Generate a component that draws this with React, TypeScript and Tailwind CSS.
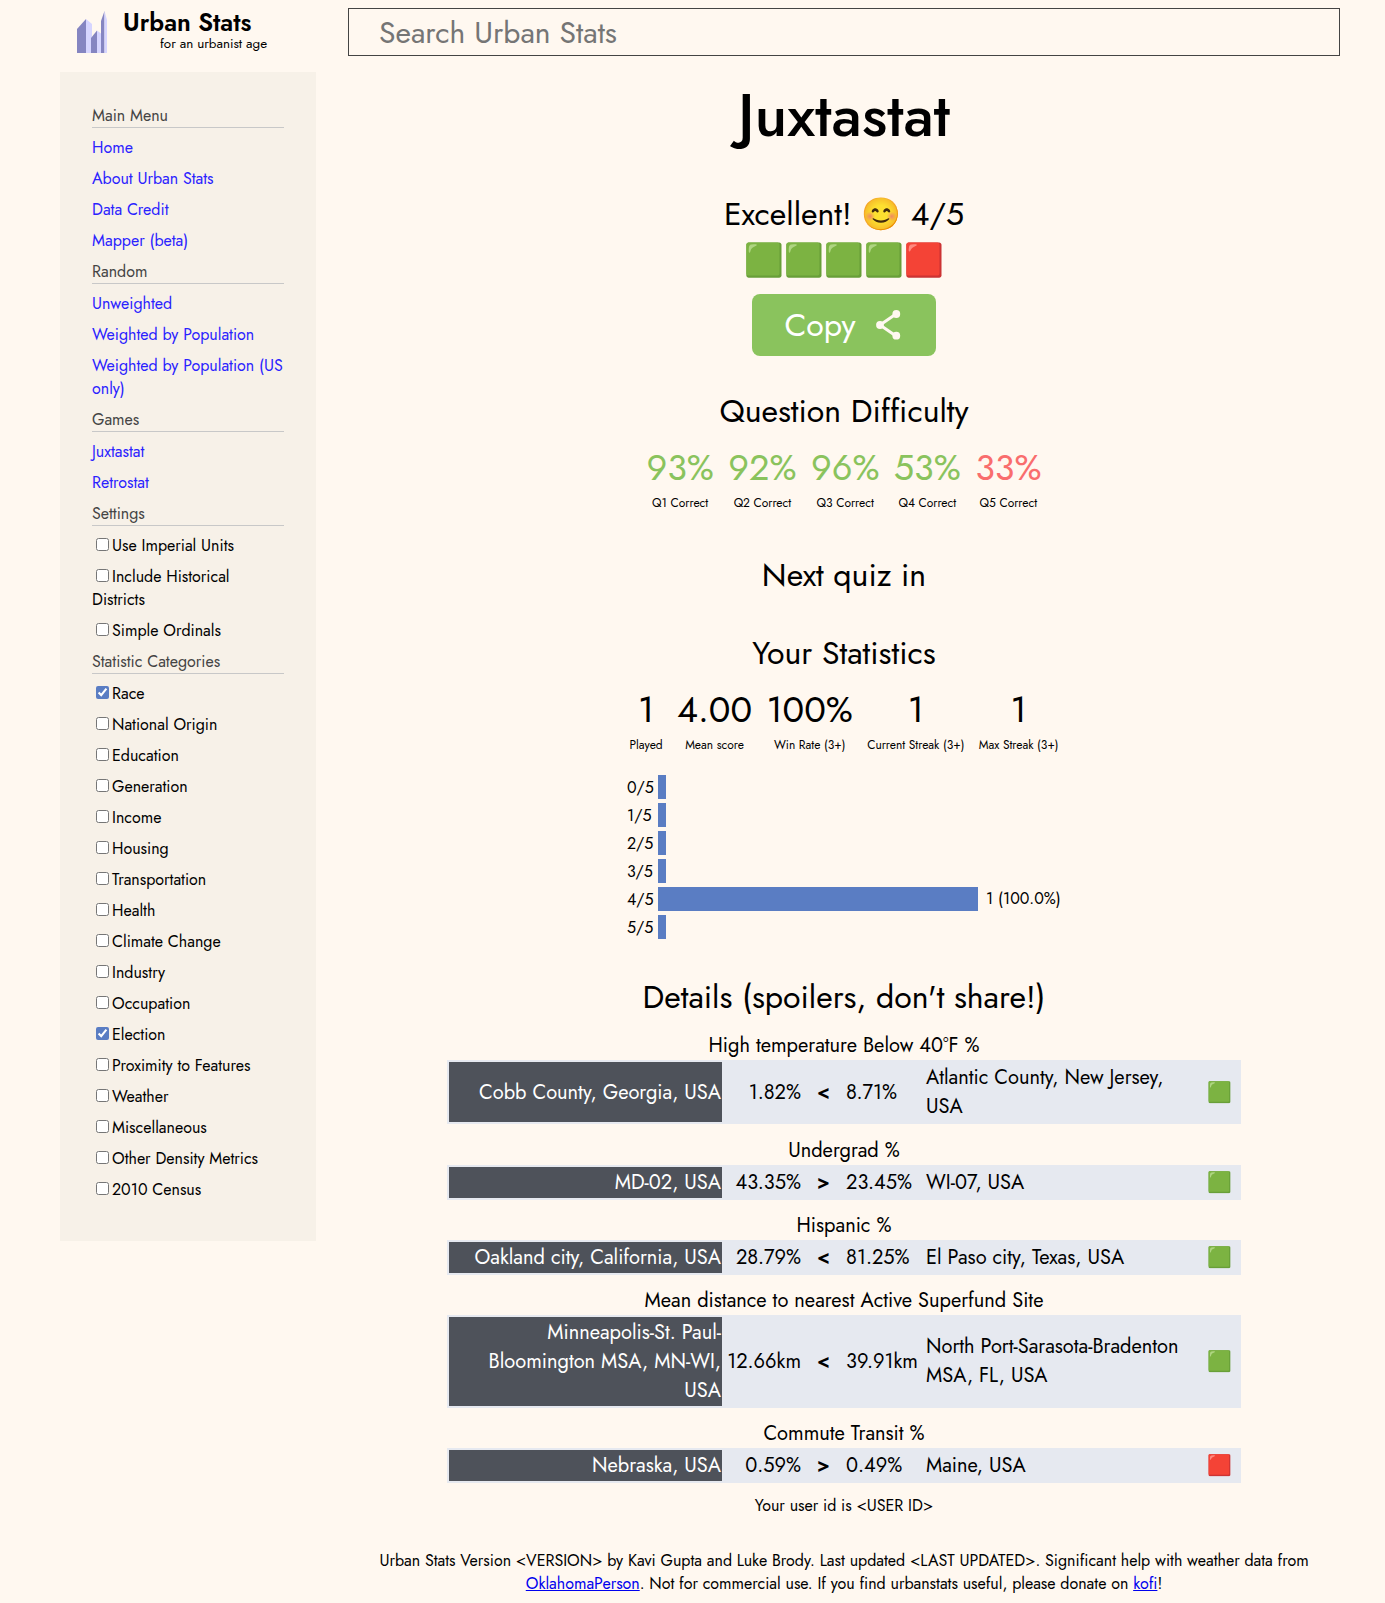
import React from "react";

const menu: { title: string; links: string[] }[] = [
  { title: "Main Menu", links: ["Home", "About Urban Stats", "Data Credit", "Mapper (beta)"] },
  { title: "Random", links: ["Unweighted", "Weighted by Population", "Weighted by Population (US only)"] },
  { title: "Games", links: ["Juxtastat", "Retrostat"] },
];

const settings = ["Use Imperial Units", "Include Historical Districts", "Simple Ordinals"];

const categories = [
  "Race", "National Origin", "Education", "Generation", "Income", "Housing", "Transportation",
  "Health", "Climate Change", "Industry", "Occupation", "Election", "Proximity to Features",
  "Weather", "Miscellaneous", "Other Density Metrics", "2010 Census",
];
const enabled = ["Race", "Election"];

const difficulty = [
  { value: "93%", ok: true },
  { value: "92%", ok: true },
  { value: "96%", ok: true },
  { value: "53%", ok: true },
  { value: "33%", ok: false },
];

const stats = [
  ["1", "Played"],
  ["4.00", "Mean score"],
  ["100%", "Win Rate (3+)"],
  ["1", "Current Streak (3+)"],
  ["1", "Max Streak (3+)"],
];

const histogram = [0, 0, 0, 0, 1, 0];

const details = [
  { q: "High temperature Below 40°F %", a: "Cobb County, Georgia, USA", va: "1.82%", op: "<", vb: "8.71%", b: "Atlantic County, New Jersey, USA", ok: true },
  { q: "Undergrad %", a: "MD-02, USA", va: "43.35%", op: ">", vb: "23.45%", b: "WI-07, USA", ok: true },
  { q: "Hispanic %", a: "Oakland city, California, USA", va: "28.79%", op: "<", vb: "81.25%", b: "El Paso city, Texas, USA", ok: true },
  { q: "Mean distance to nearest Active Superfund Site", a: "Minneapolis-St. Paul-Bloomington MSA, MN-WI, USA", va: "12.66km", op: "<", vb: "39.91km", b: "North Port-Sarasota-Bradenton MSA, FL, USA", ok: true },
  { q: "Commute Transit %", a: "Nebraska, USA", va: "0.59%", op: ">", vb: "0.49%", b: "Maine, USA", ok: false },
];

function Logo() {
  return (
    <div className="flex h-[72px] pl-[17px] pt-[11px]">
      <svg width="30" height="42" viewBox="0 0 30 42" className="shrink-0">
        <path d="M0 18 L9 8 V42 H0 Z" fill="#8585c1" />
        <path d="M9 8 L15 13 V42 H9 Z" fill="#d6d5ff" />
        <path d="M14 27 L20 19.5 V42 H14 Z" fill="#8585c1" />
        <path d="M20 19.5 L24 22.5 V42 H20 Z" fill="#d6d5ff" />
        <path d="M24 10 L27.5 0 V42 H24 Z" fill="#8585c1" />
        <path d="M27.5 0 L30 9 V42 H27.5 Z" fill="#d6d5ff" />
      </svg>
      <div className="ml-4">
        <div className="text-[24.7px] leading-[23px] font-semibold">Urban Stats</div>
        <div className="ml-[37px] text-[13.4px] leading-[19px]">for an urbanist age</div>
      </div>
    </div>
  );
}

function MenuTitle({ children }: { children: React.ReactNode }) {
  return <h2 className="mb-2 border-b border-[#c8c8c8] text-[#444444]">{children}</h2>;
}

function CheckRow({ label, checked }: { label: string; checked: boolean }) {
  return (
    <li className="mb-2">
      <label>
        <input type="checkbox" defaultChecked={checked} className="mt-[3px] mr-[3px] mb-[3px] ml-[4px] h-[13px] w-[13px] accent-[#5a7dc3]" />
        {label}
      </label>
    </li>
  );
}

function Sidebar() {
  return (
    <aside className="w-[256px] shrink-0">
      <Logo />
      <nav className="bg-[#f7f1e8] p-8 text-[16px] leading-[23px]">
        {menu.map((s) => (
          <div key={s.title}>
            <MenuTitle>{s.title}</MenuTitle>
            <ul>
              {s.links.map((l) => (
                <li key={l} className="mb-2"><a className="text-[#2a22ff]">{l}</a></li>
              ))}
            </ul>
          </div>
        ))}
        <MenuTitle>Settings</MenuTitle>
        <ul>{settings.map((s) => <CheckRow key={s} label={s} checked={false} />)}</ul>
        <MenuTitle>Statistic Categories</MenuTitle>
        <ul>{categories.map((c) => <CheckRow key={c} label={c} checked={enabled.includes(c)} />)}</ul>
      </nav>
    </aside>
  );
}

function ShareIcon() {
  return (
    <svg width="32" height="32" viewBox="0 0 32 32" className="ml-4" fill="#fff8f0" stroke="#fff8f0">
      <path d="M24 5 L8 16 L24 27" fill="none" strokeWidth="3" />
      <circle cx="8" cy="16" r="3.9" stroke="none" />
      <circle cx="24.3" cy="5" r="3.9" stroke="none" />
      <circle cx="24.3" cy="26.7" r="3.9" stroke="none" />
    </svg>
  );
}

export default function App() {
  return (
    <div className="flex min-h-[1603px] gap-8 bg-[#fff8f0] pl-[60px] pr-[45px] font-['Jost','Lato',sans-serif] text-[16px] leading-[23px] text-black">
      <Sidebar />
      <main className="min-w-0 flex-1 pt-2 text-center">
        <input
          type="text"
          placeholder="Search Urban Stats"
          className="block h-[48px] w-full border border-[#444444] px-[30px] text-[30px] placeholder:text-[#757575]"
        />
        <h1 className="mt-[16px] text-[60px] leading-[87px] font-medium">Juxtastat</h1>

        <div className="mt-[32px] text-[32px] leading-[46px]">
          <div>Excellent! 😊 4/5</div>
          <div>🟩🟩🟩🟩🟥</div>
        </div>
        <button className="mx-auto mt-[11px] flex h-[62px] w-[184px] items-center justify-center rounded-[8px] bg-[#8ac35d] text-[32px] leading-[46px] text-white">
          Copy
          <ShareIcon />
        </button>

        <h2 className="mt-[32px] text-[32px] leading-[46px]">Question Difficulty</h2>
        <div className="mt-[7px] flex justify-center">
          {difficulty.map((d, i) => (
            <div key={i} className="px-[7.2px]">
              <div className={d.ok ? "text-[36px] leading-[52px] text-[#8ac35d]" : "text-[36px] leading-[52px] text-[#f96d6d]"}>{d.value}</div>
              <div className="mt-[2px] text-[12px] leading-[17px]">Q{i + 1} Correct</div>
            </div>
          ))}
        </div>

        <h2 className="mt-[40px] text-[32px] leading-[46px]">Next quiz in</h2>
        <h2 className="mt-[32px] text-[32px] leading-[46px]">Your Statistics</h2>
        <div className="mt-[7px] flex justify-center">
          {stats.map(([v, l]) => (
            <div key={l} className="px-[7.2px]">
              <div className="text-[36px] leading-[52px]">{v}</div>
              <div className="mt-[2px] text-[12px] leading-[17px]">{l}</div>
            </div>
          ))}
        </div>

        <div className="mx-auto mt-[21px] flex w-[434px] flex-col gap-1">
          {histogram.map((n, i) => (
            <div key={i} className="flex h-6">
              <span className="w-[31px] pt-px text-left">{i}/5</span>
              <div className="bg-[#5a7dc3]" style={{ width: 8 + n * 312 }} />
              {n > 0 && <span className="ml-2">{n} (100.0%)</span>}
            </div>
          ))}
        </div>

        <h2 className="mt-[35.15px] text-[32px] leading-[46px]">Details (spoilers, don't share!)</h2>
        <div className="text-[20px] leading-[29px]">
          {details.map((d) => (
            <section key={d.q} className="mx-auto mt-[11.2px] w-[794px]">
              <h3>{d.q}</h3>
              <div className="flex items-center bg-[#e6e9f0] p-[2px]">
                <div className="flex w-[273px] items-center justify-end self-stretch bg-[#4e525a] p-px text-right text-white">{d.a}</div>
                <div className="w-[79px] text-right">{d.va}</div>
                <div className="w-[45px] text-center font-semibold">{d.op}</div>
                <div className="w-[80px] text-left">{d.vb}</div>
                <div className="mr-2 w-[265px] py-px text-left">{d.b}</div>
                <div className="w-[40px] text-center">{d.ok ? "🟩" : "🟥"}</div>
              </div>
            </section>
          ))}
        </div>

        <p className="mt-[11px]">Your user id is &lt;USER ID&gt;</p>
        <footer className="mt-[32px] px-7">
          Urban Stats Version &lt;VERSION&gt; by Kavi Gupta and Luke Brody. Last updated &lt;LAST UPDATED&gt;. Significant help with weather data from{" "}
          <a className="text-[#0000ee] underline">OklahomaPerson</a>. Not for commercial use. If you find urbanstats useful, please donate on{" "}
          <a className="text-[#0000ee] underline">kofi</a>!
        </footer>
      </main>
    </div>
  );
}
